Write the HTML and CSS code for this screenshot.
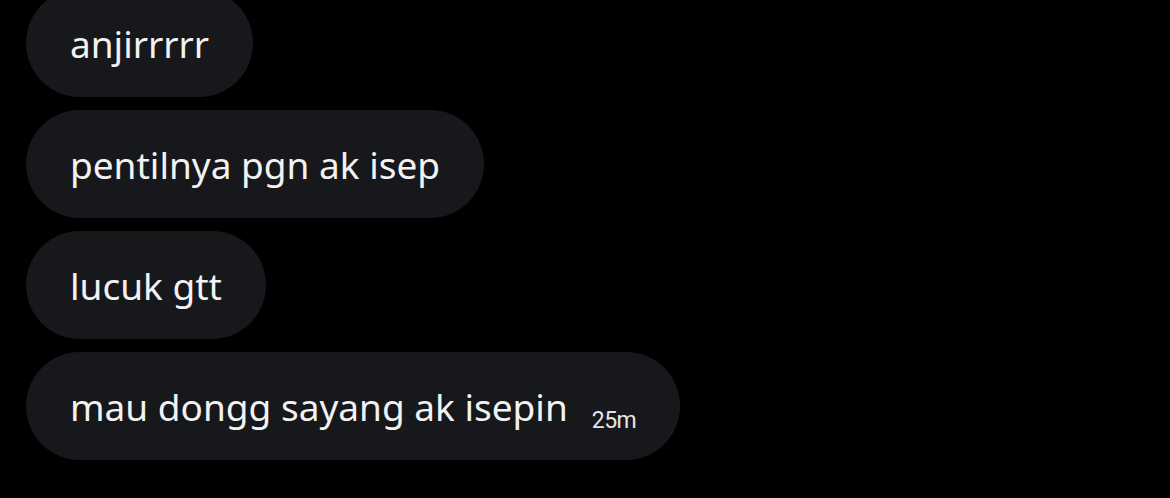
FILE: index.html
```html
<!DOCTYPE html>
<html>
<head>
<meta charset="utf-8">
<link rel="stylesheet" href="styles.css">
</head>
<body>
<div class="thread">
  <div class="bubble"><span class="msg">anjirrrrr</span></div>
  <div class="bubble"><span class="msg">pentilnya pgn ak isep</span></div>
  <div class="bubble"><span class="msg">lucuk gtt</span></div>
  <div class="bubble last"><span class="msg">mau dongg sayang ak isepin</span><span class="time">25m</span></div>
</div>
</body>
</html>
```
FILE: styles.css
```css
html, body {
  margin: 0;
  padding: 0;
  background: #000;
  height: 100%;
  overflow: hidden;
}
.thread {
  display: flex;
  flex-direction: column;
  align-items: flex-start;
  gap: 13px;
  padding-left: 26px;
  margin-top: -11px;
}
.bubble {
  height: 108px;
  box-sizing: border-box;
  border-radius: 54px;
  background: #16181b;
  padding: 0 44px;
  display: flex;
  align-items: center;
  color: #f2f2f2;
  font-family: "Noto Sans", "Open Sans", sans-serif;
  font-size: 37px;
}
.msg {
  line-height: 1;
}
.time {
  font-family: Roboto, "Liberation Sans", sans-serif;
  font-size: 23px;
  margin-left: 24px;
  margin-top: 28px;
  color: #e6e6e6;
  letter-spacing: -0.5px;
}
```
